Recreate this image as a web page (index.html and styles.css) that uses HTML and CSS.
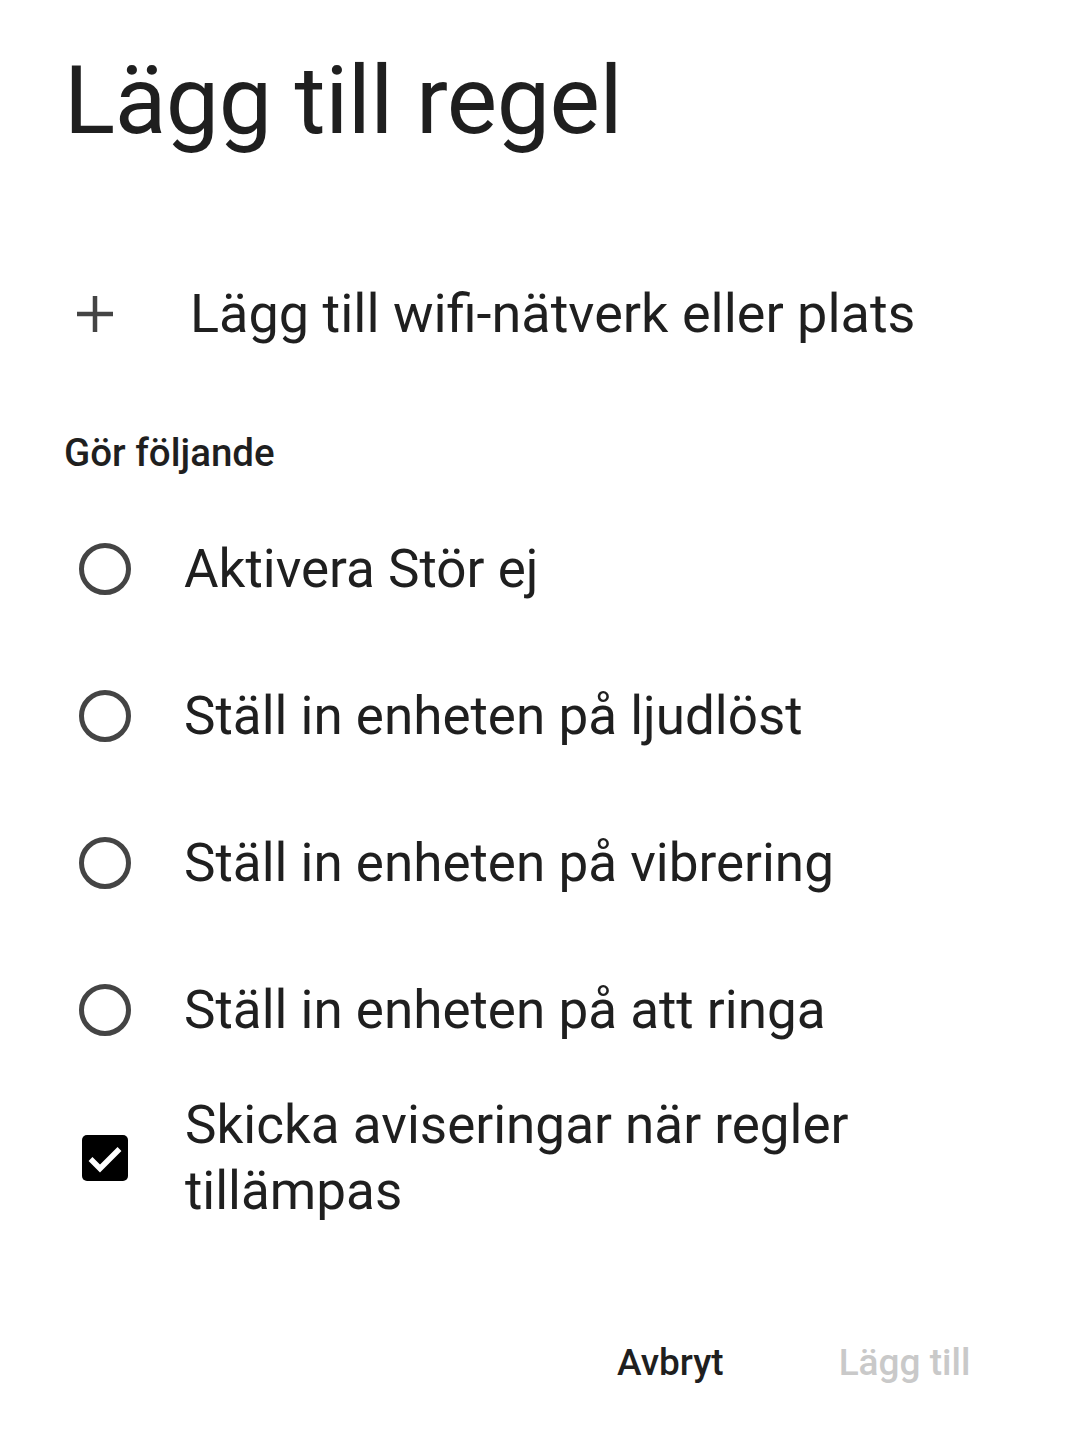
FILE: index.html
```html
<!DOCTYPE html>
<html lang="sv">
<head>
<meta charset="utf-8">
<link rel="stylesheet" href="styles.css">
</head>
<body>
<div class="dialog">
  <h1 class="title">Lägg till regel</h1>
  <div class="add-row">
    <svg class="plus" width="40" height="40" viewBox="0 0 40 40"><path d="M20 2v36M2 20h36" stroke="#444" stroke-width="4.5" fill="none"/></svg>
    <span class="row-text">Lägg till wifi-nätverk eller plats</span>
  </div>
  <div class="section">Gör följande</div>
  <div class="options">
    <div class="option"><span class="radio"></span><span class="row-text">Aktivera Stör ej</span></div>
    <div class="option"><span class="radio"></span><span class="row-text">Ställ in enheten på ljudlöst</span></div>
    <div class="option"><span class="radio"></span><span class="row-text">Ställ in enheten på vibrering</span></div>
    <div class="option"><span class="radio"></span><span class="row-text">Ställ in enheten på att ringa</span></div>
    <div class="option check-option">
      <span class="checkbox"><svg width="46" height="46" viewBox="0 0 46 46"><path d="M8.5 24l9.5 9.5L37.5 14" stroke="#fff" stroke-width="5.5" fill="none"/></svg></span>
      <span class="row-text multi">Skicka aviseringar när regler tillämpas</span>
    </div>
  </div>
  <div class="actions">
    <span class="btn">Avbryt</span>
    <span class="btn disabled">Lägg till</span>
  </div>
</div>
</body>
</html>
```
FILE: styles.css
```css
html, body { margin: 0; padding: 0; background: #fff; }
body { font-family: Roboto, "Noto Sans", sans-serif; color: #1f1f1f; }
.dialog { width: 1080px; height: 1436px; padding: 0 0 0 64px; box-sizing: border-box; display: flex; flex-direction: column; }
.title { margin: 0; font-weight: 400; font-size: 95px; line-height: 112px; padding-top: 45px; height: 112px; letter-spacing: -0.5px; }
.add-row { display: flex; align-items: center; height: 80px; margin-top: 117px; }
.plus { margin-left: 11px; width: 40px; height: 40px; }
.add-row .row-text { margin-left: 75px; }
.row-text { font-size: 54px; line-height: 66px; }
.section { font-size: 38.5px; font-weight: 500; margin-top: 77px; line-height: 44px; height: 44px; }
.options { display: flex; flex-direction: column; margin-top: 46px; }
.option { display: flex; align-items: center; height: 147px; }
.option:first-child { margin-top: -26px; }
.option .row-text { margin-left: 53px; font-size: 53px; }
.radio { width: 42px; height: 42px; border: 5px solid #444; border-radius: 50%; margin-left: 15px; flex: none; }
.check-option { height: 150px; }
.checkbox { width: 46px; height: 46px; background: #000; border-radius: 5px; margin-left: 18px; flex: none; display: flex; }
.check-option .row-text { margin-left: 57px; width: 720px; }
.actions { display: flex; margin-top: 108px; padding-left: 553px; align-items: center; }
.btn { font-size: 37px; font-weight: 500; line-height: 44px; }
.btn.disabled { color: #c9c9c9; margin-left: 115px; }
```
